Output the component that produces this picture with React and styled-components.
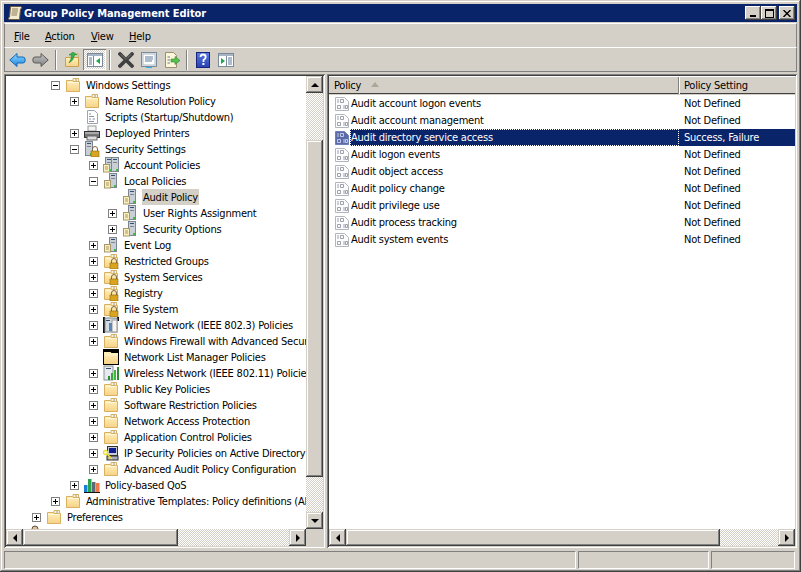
import React from "react";
import styled, { createGlobalStyle } from "styled-components";

const GRAY = "#d4d0c8";
const FONT = `"DejaVu Sans", Verdana, sans-serif`;

const Global = createGlobalStyle`
  html, body { margin: 0; padding: 0; background: ${GRAY}; }
  * { box-sizing: border-box; }
`;

const Win = styled.div`
  width: 801px; height: 572px; background: ${GRAY}; padding: 4px 4px 3px;
  display: flex; flex-direction: column; overflow: hidden;
  font: 11px ${FONT}; font-stretch: condensed; letter-spacing: -0.22px; color: #000;
  box-shadow: inset -1px -1px #404040, inset 1px 1px ${GRAY}, inset -2px -2px #808080, inset 2px 2px #fff;
`;
const TitleBar = styled.div`
  height: 18px; background: #0a246a; display: flex; align-items: center; padding: 0 2px 0 3px;
  color: #fff; font-weight: bold; font-size: 11px; flex: none; letter-spacing: -0.06px;
`;
const TitleText = styled.span`margin-left: 1px; flex: 1;`;
const CapBtn = styled.div`
  width: 16px; height: 14px; background: ${GRAY}; margin-left: ${p => p.$gap || 0}px;
  display: flex; align-items: center; justify-content: center;
  box-shadow: inset -1px -1px #404040, inset 1px 1px #fff, inset -2px -2px #808080;
`;
const MenuBar = styled.div`
  height: 24px; margin: 1px 0 0 0; flex: none; display: flex; align-items: center; padding: 2px 0 0 4px;
  border-top: 1px solid #fff; border-left: 1px solid #808080; border-right: 1px solid #808080;
`;
const MenuItem = styled.span`
  width: ${p => p.$w}px; padding-left: 5px;
  u { text-decoration: underline; text-underline-offset: 1px; }
`;
const ToolBar = styled.div`
  height: 25px; flex: none; display: flex; align-items: center; padding-left: 1px;
  border-top: 1px solid #fff; border-left: 1px solid #808080; border-right: 1px solid #808080;
  border-bottom: 1px solid #808080;
`;
const ToolBtn = styled.div`
  width: 23px; height: 21px; display: flex; align-items: center; justify-content: center;
  ${p => p.$on && `
    background: repeating-conic-gradient(#fff 0 25%, ${GRAY} 0 50%) 0 0/2px 2px;
    box-shadow: inset 1px 1px #808080, inset -1px -1px #fff;
  `}
`;
const ToolSep = styled.div`
  width: 2px; height: 20px; margin: 0 3px; border-left: 1px solid #808080; border-right: 1px solid #fff;
`;
const Work = styled.div`
  flex: 1; min-height: 0; display: flex; gap: 2px; margin-top: 2px;
`;
const Pane = styled.div`
  width: ${p => p.$w}px; flex: none; height: 474px; padding: 2px;
  display: grid; background: ${GRAY};
  box-shadow: inset 1px 1px #808080, inset -1px -1px #fff, inset 2px 2px #404040, inset -2px -2px ${GRAY};
  grid-template-columns: ${p => p.$cols};
  grid-template-rows: 1fr 17px;
  overflow: hidden;
`;
const Tree = styled.div`
  background: #fff; padding-top: 1px; overflow: hidden; min-height: 0;
`;
const TreeRow = styled.div`
  height: 16px; display: flex; align-items: center; white-space: nowrap;
  padding-left: ${p => 26 + p.$level * 19}px;
`;
const Expander = styled.span`
  width: 9px; height: 9px; flex: none; margin-right: 5px; border: 1px solid #808080; background: #fff;
  position: relative; visibility: ${p => p.$kind ? "visible" : "hidden"};
  &::before { content: ""; position: absolute; left: 1px; top: 3px; width: 5px; height: 1px; background: #000; }
  &::after { content: ""; position: absolute; left: 3px; top: 1px; width: 1px; height: 5px; background: #000;
    display: ${p => p.$kind === "plus" ? "block" : "none"}; }
`;
const IconBox = styled.span`
  width: 16px; height: 16px; flex: none; display: block;
  svg { display: block; }
`;
const Label = styled.span`
  margin-left: 4px; padding: 0 1px; height: 16px; line-height: 18px;
  background: ${p => p.$sel ? GRAY : "transparent"};
`;
const VBar = styled.div`display: flex; flex-direction: column; min-height: 0;`;
const HBar = styled.div`display: flex; min-width: 0;`;
const Arrow = styled.div`
  width: 17px; height: 17px; flex: none; background: ${GRAY};
  display: flex; align-items: center; justify-content: center;
  box-shadow: inset -1px -1px #404040, inset 1px 1px ${GRAY}, inset -2px -2px #808080, inset 2px 2px #fff;
`;
const Thumb = styled.div`
  background: ${GRAY};
  ${p => p.$v ? `height:${p.$size}px;` : `width:${p.$size}px;`} flex: none;
  box-shadow: inset -1px -1px #404040, inset 1px 1px ${GRAY}, inset -2px -2px #808080, inset 2px 2px #fff;
`;
const Track = styled.div`
  ${p => p.$v ? `height:${p.$size}px;` : `width:${p.$size}px;`} flex: none;
  background: repeating-conic-gradient(#fff 0 25%, ${GRAY} 0 50%) 0 0/2px 2px;
`;
const Corner = styled.div`background: ${GRAY};`;
const ListWrap = styled.div`background: #fff; overflow: hidden; min-height: 0;`;
const Header = styled.div`
  height: 19px; background: ${GRAY}; display: flex; align-items: flex-start;
  box-shadow: inset 0 1px #fff, inset 0 -1px ${GRAY}, inset 0 -2px #404040;
`;
const HeadCell = styled.div`
  width: ${p => p.$w}px; flex: none; height: 17px; margin-top: 1px; display: flex; align-items: center;
  padding-left: 5px;
  border-right: ${p => p.$last ? "none" : "1px solid #808080"};
  box-shadow: ${p => p.$last ? "inset 1px 0 #fff" : "none"};
`;
const SortMark = styled.span`
  width: 0; height: 0; margin-left: 10px; margin-top: -2px;
  border-left: 4px solid transparent; border-right: 4px solid transparent; border-bottom: 5px solid #aca899;
`;
const ListRow = styled.div`
  height: 17px; display: flex; align-items: center; padding-left: 5px; white-space: nowrap;
`;
const NameCell = styled.span`
  width: 329px; flex: none; height: 17px; line-height: 15px;
  border: 1px dotted ${p => p.$sel ? "#fff" : "transparent"};
  background: ${p => p.$sel ? "#0a246a" : "transparent"}; color: ${p => p.$sel ? "#fff" : "#000"};
`;
const ValueCell = styled.span`
  flex: 1; height: 17px; line-height: 17px; padding-left: 5px;
  background: ${p => p.$sel ? "#0a246a" : "transparent"}; color: ${p => p.$sel ? "#fff" : "#000"};
`;
const Status = styled.div`
  height: 18px; margin-top: 2px; display: flex; gap: 2px; flex: none;
`;
const StatusCell = styled.div`
  width: ${p => p.$w}px; flex: none; border: 1px solid; border-color: #808080 #fff #fff #808080;
`;

const S = ({ children, w = 16, h = 16 }) => <svg width={w} height={h} viewBox={`0 0 ${w} ${h}`}>{children}</svg>;

const Grad = ({ id, a, b }) => (
  <defs>
    <linearGradient id={id} x1="0" y1="0" x2="0" y2="1">
      <stop offset="0" stopColor={a} />
      <stop offset="1" stopColor={b} />
    </linearGradient>
  </defs>
);

const FolderShape = () => (
  <>
    <Grad id="fld" a="#fff0bd" b="#f6d284" />
    <path d="M1.5 3.5 V14.5 H14.5 V4.5 H8.5 L7.5 3.5 Z" fill="url(#fld)" stroke="#d8b060" />
    <path d="M8 1.5 H13.5 V4.5 H8 Z" fill="#fff7d8" stroke="#d8b060" />
    <path d="M2.5 5.5 H13.5" stroke="#fff8da" />
    <path d="M10 3 H12" stroke="#7f9ac0" />
  </>
);
const Lock = () => (
  <>
    <path d="M8.5 10 V8 a2.5 2.5 0 0 1 5 0 V10" fill="none" stroke="#7a6a40" />
    <rect x="7" y="10" width="8" height="6" fill="#d9a520" stroke="#8a6a10" strokeWidth="0.6" />
  </>
);
const Folder = () => <S><FolderShape /></S>;
const FolderLock = () => <S><FolderShape /><Lock /></S>;
const FolderBlack = () => <S><Grad id="fld2" a="#fff0bd" b="#f6d284" /><rect width="16" height="16" fill="#000" /><path d="M1 3 H7.5 L8.5 4 H15 V15 H1 Z" fill="url(#fld2)" /><path d="M2 6 H14" stroke="#fff8da" /></S>;
const Script = () => (
  <S>
    <path d="M3.5 1.5 H10.5 L13.5 4.5 V14.5 H3.5 Z" fill="#fff" stroke="#a0a4ac" />
    <path d="M5 5 H7 M5 7.5 H10 M5 10 H7 M8.5 10 H11 M5 12.5 H10" stroke="#8a93a3" />
  </S>
);
const Printer = () => (
  <S>
    <rect x="4" y="1" width="8" height="5" fill="#f4f4f4" stroke="#999" />
    <rect x="0.5" y="6.5" width="15" height="6" fill="#777" stroke="#333" />
    <rect x="1" y="7" width="14" height="2" fill="#aaa" />
    <rect x="3" y="11" width="10" height="4" fill="#ddd" stroke="#666" />
  </S>
);
const Tower = ({ x = 0 }) => (
  <g transform={`translate(${x} 0)`}>
    <rect x="0.5" y="0.5" width="7" height="14" fill="#c9cfd6" stroke="#7d8590" />
    <rect x="2" y="2" width="4" height="1" fill="#33506e" />
    <rect x="2" y="5" width="4" height="1" fill="#7d8590" />
    <rect x="5" y="12" width="2" height="2" fill="#3ac23a" />
  </g>
);
const Doc = ({ x = 0, y = 7 }) => (
  <g transform={`translate(${x} ${y})`}>
    <rect x="0.5" y="0.5" width="6" height="7.5" fill="#f8eec0" stroke="#a89868" />
    <path d="M2 3 H5 M2 5 H5" stroke="#a89868" />
  </g>
);
const Policy = () => <S><Tower x={6} /><Doc x={1} y={7} /></S>;
const PolicyStack = () => <S><Tower x={2} /><Tower x={8} /><Doc x={0} y={7} /></S>;
const Secure = () => <S><Tower x={1} /><Lock /></S>;
const Wired = () => (
  <S>
    <path d="M0 0 H2 V16 H0 Z M14 0 H16 V4 H14 Z" fill="#111" />
    <rect x="2" y="1" width="12" height="14" fill="#d4dae0" stroke="#7d8590" />
    <rect x="9" y="3" width="5" height="12" fill="#f4f4f4" stroke="#999" />
    <rect x="6" y="6" width="3" height="8" fill="#5a87b8" />
    <rect x="3" y="3" width="4" height="1" fill="#33506e" />
  </S>
);
const Wireless = () => (
  <S>
    <rect x="1" y="1" width="9" height="14" fill="#e7eaee" stroke="#8a919a" />
    <rect x="3" y="3" width="5" height="1" fill="#33506e" />
    <rect x="5" y="11" width="2" height="4" fill="#2e8f2e" />
    <rect x="8" y="8" width="2" height="7" fill="#3aa63a" />
    <rect x="11" y="5" width="2" height="10" fill="#45b445" />
    <rect x="14" y="2" width="2" height="13" fill="#2e8f2e" />
  </S>
);
const IPSec = () => (
  <S>
    <rect x="4.5" y="1.5" width="10" height="9" fill="#c8ccd0" stroke="#333" />
    <rect x="6" y="3" width="7" height="5" fill="#101c90" />
    <rect x="4" y="11" width="11" height="4" fill="#aab" stroke="#333" />
    <circle cx="2.5" cy="7.5" r="2" fill="none" stroke="#f0e020" strokeWidth="1.4" />
    <path d="M4 9 L9 14 M7 12 L6 14" stroke="#f0e020" strokeWidth="1.5" />
  </S>
);
const QoS = () => (
  <S>
    <rect x="0" y="8" width="3.5" height="8" fill="#1d7fd6" />
    <rect x="4" y="2" width="3.5" height="14" fill="#2aa44a" />
    <rect x="8" y="5" width="3.5" height="11" fill="#5a6a7a" />
    <rect x="12" y="6" width="3.5" height="10" fill="#ee7a4a" />
    <path d="M0 15.5 H16" stroke="#111" />
  </S>
);
const UserIcon = () => <S><circle cx="8" cy="4" r="3" fill="#e8b890" stroke="#554" /><path d="M3 15 V10 Q8 5 13 10 V15 Z" fill="#777" /></S>;

const Binary = ({ sel }) => {
  const c = sel ? "#c4c9e6" : "#9aa0ac";
  return (
    <S>
      <path d="M1.5 1.5 H10.5 L14.5 5.5 V14.5 H1.5 Z" fill={sel ? "#5a6ca8" : "#fdfdfd"} stroke={sel ? "#6e7fb5" : "#b0b5be"} />
      <path d="M4 3 V7 M10 9 V13" stroke={c} />
      <path d="M6.5 3.5 H9.5 V6.5 H6.5 Z M3.5 9.5 H6.5 V12.5 H3.5 Z M11.5 9.5 H13.5 V12.5 H11.5 Z" fill="none" stroke={c} />
    </S>
  );
};

const ICON = { folder: Folder, lock: FolderLock, black: FolderBlack, script: Script, printer: Printer, policy: Policy, stack: PolicyStack, secure: Secure, wired: Wired, wireless: Wireless, ipsec: IPSec, qos: QoS, user: UserIcon };

const tree = [
  [1, "minus", "folder", "Windows Settings"],
  [2, "plus", "folder", "Name Resolution Policy"],
  [2, null, "script", "Scripts (Startup/Shutdown)"],
  [2, "plus", "printer", "Deployed Printers"],
  [2, "minus", "secure", "Security Settings"],
  [3, "plus", "stack", "Account Policies"],
  [3, "minus", "policy", "Local Policies"],
  [4, null, "policy", "Audit Policy", true],
  [4, "plus", "policy", "User Rights Assignment"],
  [4, "plus", "policy", "Security Options"],
  [3, "plus", "policy", "Event Log"],
  [3, "plus", "lock", "Restricted Groups"],
  [3, "plus", "lock", "System Services"],
  [3, "plus", "lock", "Registry"],
  [3, "plus", "lock", "File System"],
  [3, "plus", "wired", "Wired Network (IEEE 802.3) Policies"],
  [3, "plus", "folder", "Windows Firewall with Advanced Security"],
  [3, null, "black", "Network List Manager Policies"],
  [3, "plus", "wireless", "Wireless Network (IEEE 802.11) Policies"],
  [3, "plus", "folder", "Public Key Policies"],
  [3, "plus", "folder", "Software Restriction Policies"],
  [3, "plus", "folder", "Network Access Protection"],
  [3, "plus", "folder", "Application Control Policies"],
  [3, "plus", "ipsec", "IP Security Policies on Active Directory"],
  [3, "plus", "folder", "Advanced Audit Policy Configuration"],
  [2, "plus", "qos", "Policy-based QoS"],
  [1, "plus", "folder", "Administrative Templates: Policy definitions (ADMX files)"],
  [0, "plus", "folder", "Preferences"],
  [-1, "plus", "user", "User Configuration"],
];

const rows = [
  ["Audit account logon events", "Not Defined"],
  ["Audit account management", "Not Defined"],
  ["Audit directory service access", "Success, Failure", true],
  ["Audit logon events", "Not Defined"],
  ["Audit object access", "Not Defined"],
  ["Audit policy change", "Not Defined"],
  ["Audit privilege use", "Not Defined"],
  ["Audit process tracking", "Not Defined"],
  ["Audit system events", "Not Defined"],
];

const Tri = ({ dir, color = "#000" }) => {
  const d = { up: "M4 0 L8 4 H0 Z", down: "M0 0 H8 L4 4 Z", left: "M4 0 V8 L0 4 Z", right: "M0 0 L4 4 L0 8 Z" }[dir];
  const v = dir === "up" || dir === "down";
  return <svg width={v ? 8 : 4} height={v ? 4 : 8} viewBox={v ? "0 0 8 4" : "0 0 4 8"}><path d={d} fill={color} /></svg>;
};

const Back = () => (
  <S w={17}>
    <Grad id="bk" a="#8fd8ff" b="#1f86e0" />
    <path d="M0.8 8 L8 1.5 V5 H14 Q16.2 5 16.2 8 Q16.2 11 14 11 H8 V14.5 Z" fill="url(#bk)" stroke="#1468b8" />
  </S>
);
const Forward = () => (
  <S w={17}>
    <Grad id="fw" a="#c4c4c4" b="#808080" />
    <path d="M16.2 8 L9 1.5 V5 H3 Q0.8 5 0.8 8 Q0.8 11 3 11 H9 V14.5 Z" fill="url(#fw)" stroke="#5c5c5c" />
  </S>
);
const UpFolder = () => (
  <S>
    <Grad id="upf" a="#fff0bd" b="#f6d284" />
    <path d="M1.5 5.5 V14.5 H14.5 V5.5 Z" fill="url(#upf)" stroke="#c9a050" />
    <path d="M8 2 H14 V5" fill="#fff7d8" stroke="#c9a050" />
    <path d="M9 0 L13 3 H10.5 Q10 8 5 11 Q7.5 7 7.5 3 H5 Z" fill="#36b24a" stroke="#1a7a2a" strokeWidth="0.5" />
  </S>
);
const PaneIcon = ({ mirror }) => (
  <S>
    <rect x="0.5" y="1.5" width="15" height="13" fill="#fff" stroke="#7a8a9a" />
    <rect x="1" y="2" width="14" height="2" fill="#a6b4c4" />
    {mirror ? (
      <>
        <path d="M3 6 V12 L7 9 Z" fill="#1da84a" />
        <path d="M10 6 H14 M10 8 H14 M10 10 H14 M10 12 H14" stroke="#5b7a9a" />
        <path d="M8.5 4 V14" stroke="#7a8a9a" />
      </>
    ) : (
      <>
        <path d="M2 6 H5 M2 8 H5 M2 10 H5 M2 12 H5" stroke="#5b7a9a" />
        <path d="M6.5 4 V14" stroke="#7a8a9a" />
        <path d="M13 6 V12 L9 9 Z" fill="#1da84a" />
      </>
    )}
  </S>
);
const Cross = () => (
  <S>
    <path d="M2 2 L14 14 M14 2 L2 14" stroke="#404040" strokeWidth="3.8" strokeLinecap="round" />
    <path d="M3 2.5 L8 7.5 M13 2.5 L9 6.5" stroke="#7c7c7c" />
  </S>
);
const Props = () => (
  <S>
    <rect x="0.5" y="0.5" width="15" height="14" fill="#eef1f5" stroke="#7a8a9a" />
    <rect x="2" y="2" width="12" height="11" fill="#fff" stroke="#b0bac6" />
    <path d="M4 5 H12 M4 7 H12 M4 9 H11" stroke="#5b7a9a" />
    <rect x="5" y="15" width="6" height="1" fill="#35b0e0" />
  </S>
);
const Export = () => (
  <S>
    <path d="M1.5 0.5 H9.5 L12.5 3.5 V15.5 H1.5 Z" fill="#fdf6da" stroke="#9a9070" />
    <path d="M3.5 5 H6 M3.5 8 H6 M3.5 11 H6" stroke="#6a7a8a" />
    <path d="M7 7 H11 V4.5 L16 8.5 L11 12.5 V10 H7 Z" fill="#58c050" stroke="#2a8a2a" strokeWidth="0.6" />
  </S>
);
const Help = () => (
  <S>
    <Grad id="hp" a="#5a7ce0" b="#2a3fb0" />
    <rect x="1.5" y="0.5" width="13" height="15" fill="url(#hp)" stroke="#18257a" />
    <path d="M5.5 5 Q5.5 2.5 8 2.5 Q10.7 2.5 10.7 5 Q10.7 6.8 8.5 8 V10" fill="none" stroke="#fff" strokeWidth="1.8" />
    <rect x="7.4" y="11" width="2" height="2" fill="#fff" />
  </S>
);
const AppIcon = () => (
  <S>
    <path d="M3.5 1.5 H14 Q15.5 2.5 14 4 H13.5 L12.5 14.5 H2 Q0.5 13 2.5 12 Z" fill="#f3ecd0" stroke="#6a5a40" />
    <path d="M5 4 H11 M5 6 H11 M4.5 8 H10.5 M4.5 10 H10" stroke="#8a7a58" />
  </S>
);

export default function App() {
  return (
    <Win>
      <Global />
      <TitleBar>
        <AppIcon />
        <TitleText>Group Policy Management Editor</TitleText>
        <CapBtn><svg width="8" height="8"><rect x="1" y="6" width="6" height="2" fill="#000" /></svg></CapBtn>
        <CapBtn><svg width="9" height="9"><rect x="0.5" y="0.5" width="8" height="8" fill="none" stroke="#000" /><rect x="0" y="0" width="9" height="2" fill="#000" /></svg></CapBtn>
        <CapBtn $gap={2}><svg width="8" height="7"><path d="M0.5 0 L7.5 7 M7.5 0 L0.5 7" stroke="#000" strokeWidth="1.4" /></svg></CapBtn>
      </TitleBar>
      <MenuBar>
        <MenuItem $w={31}><u>F</u>ile</MenuItem>
        <MenuItem $w={46}><u>A</u>ction</MenuItem>
        <MenuItem $w={38}><u>V</u>iew</MenuItem>
        <MenuItem $w={40}><u>H</u>elp</MenuItem>
      </MenuBar>
      <ToolBar>
        <ToolBtn><Back /></ToolBtn>
        <ToolBtn><Forward /></ToolBtn>
        <ToolSep />
        <ToolBtn><UpFolder /></ToolBtn>
        <ToolBtn $on><PaneIcon /></ToolBtn>
        <ToolSep />
        <ToolBtn><Cross /></ToolBtn>
        <ToolBtn><Props /></ToolBtn>
        <ToolBtn><Export /></ToolBtn>
        <ToolSep />
        <ToolBtn><Help /></ToolBtn>
        <ToolBtn><PaneIcon mirror /></ToolBtn>
      </ToolBar>
      <Work>
        <Pane $w={321} $cols="1fr 17px">
          <Tree>
            {tree.map(([level, exp, icon, text, sel]) => {
              const I = ICON[icon];
              return (
                <TreeRow key={text} $level={level}>
                  <Expander $kind={exp} />
                  <IconBox><I /></IconBox>
                  <Label $sel={sel}>{text}</Label>
                </TreeRow>
              );
            })}
          </Tree>
          <VBar>
            <Arrow><Tri dir="up" /></Arrow>
            <Track $v $size={47} />
            <Thumb $v $size={337} />
            <Track $v $size={35} />
            <Arrow><Tri dir="down" /></Arrow>
          </VBar>
          <HBar>
            <Arrow><Tri dir="left" /></Arrow>
            <Thumb $size={155} />
            <Track $size={111} />
            <Arrow><Tri dir="right" /></Arrow>
          </HBar>
          <Corner />
        </Pane>
        <Pane $w={470} $cols="1fr">
          <ListWrap>
            <Header>
              <HeadCell $w={350}>Policy<SortMark /></HeadCell>
              <HeadCell $w={116} $last>Policy Setting</HeadCell>
            </Header>
            {rows.map(([name, value, sel]) => (
              <ListRow key={name}>
                <IconBox><Binary sel={sel} /></IconBox>
                <NameCell $sel={sel}>{name}</NameCell>
                <ValueCell $sel={sel}>{value}</ValueCell>
              </ListRow>
            ))}
          </ListWrap>
          <HBar>
            <Arrow><Tri dir="left" /></Arrow>
            <Thumb $size={374} />
            <Track $size={58} />
            <Arrow><Tri dir="right" /></Arrow>
          </HBar>
        </Pane>
      </Work>
      <Status>
        <StatusCell $w={572} />
        <StatusCell $w={131} />
        <StatusCell $w={84} />
      </Status>
    </Win>
  );
}
